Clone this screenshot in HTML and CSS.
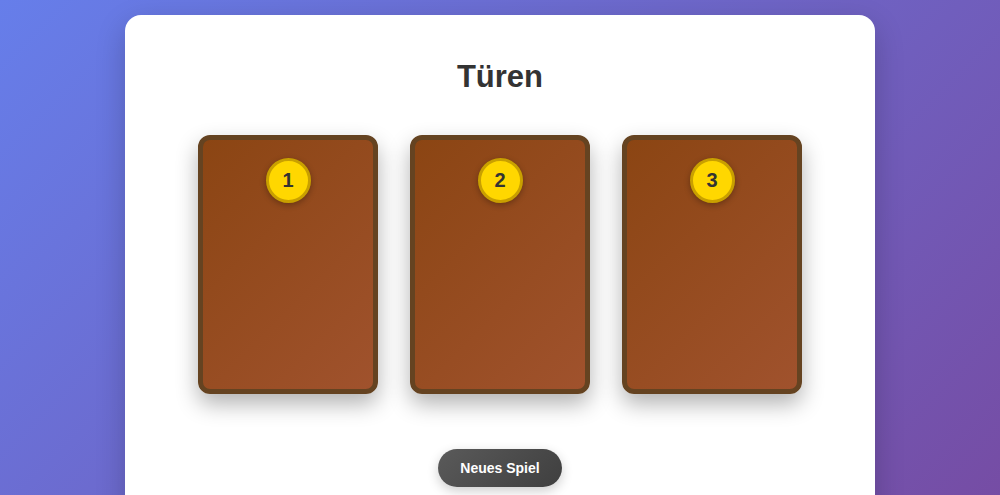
FILE: index.html
```html
<!DOCTYPE html>
<html lang="de">
<head>
    <meta charset="UTF-8">
    <meta name="viewport" content="width=device-width, initial-scale=1.0">
    <title>Türen</title>
    <link rel="stylesheet" href="styles.css">
</head>
<body>
    <div class="container">
        <h1>Türen</h1>
        <div class="doors">
            <div class="door"><span class="door-number">1</span></div>
            <div class="door"><span class="door-number">2</span></div>
            <div class="door"><span class="door-number">3</span></div>
        </div>
        <button class="button">Neues Spiel</button>
    </div>
</body>
</html>
```

FILE: styles.css
```css
body {
    font-family: "Liberation Sans", Arial, sans-serif;
    background: linear-gradient(135deg, #667eea 0%, #764ba2 100%);
    margin: 0;
    padding: 15px;
    min-height: 100vh;
    box-sizing: border-box;
}
.container {
    max-width: 750px;
    margin: 0 auto;
    background: white;
    padding: 44px 40px 40px;
    border-radius: 16px;
    box-shadow: 0 10px 30px rgba(0, 0, 0, 0.2);
    text-align: center;
    box-sizing: border-box;
}
h1 {
    font-size: 31px;
    color: #333;
    margin: 0 0 40px;
}
.doors {
    display: flex;
    justify-content: center;
    gap: 32px;
}
.door {
    width: 180px;
    height: 259px;
    box-sizing: border-box;
    background: linear-gradient(135deg, #8B4513 0%, #A0522D 100%);
    border: 5px solid #654321;
    border-radius: 12px;
    box-shadow: 0 10px 22px rgba(0, 0, 0, 0.3);
    display: flex;
    justify-content: center;
    align-items: flex-start;
    padding-top: 18px;
}
.door-number {
    width: 45px;
    height: 45px;
    box-sizing: border-box;
    border-radius: 50%;
    background: #FFD700;
    border: 3px solid #C9A000;
    box-shadow: 0 2px 6px rgba(0, 0, 0, 0.3);
    color: #333;
    font-size: 20px;
    font-weight: bold;
    display: flex;
    justify-content: center;
    align-items: center;
}
.button {
    margin-top: 55px;
    padding: 11px 22px;
    border: none;
    border-radius: 25px;
    background: linear-gradient(135deg, #5a5a5a 0%, #3f3f3f 100%);
    color: white;
    font-family: inherit;
    font-size: 14px;
    font-weight: bold;
    cursor: pointer;
    box-shadow: 0 4px 12px rgba(0, 0, 0, 0.2);
}
```
